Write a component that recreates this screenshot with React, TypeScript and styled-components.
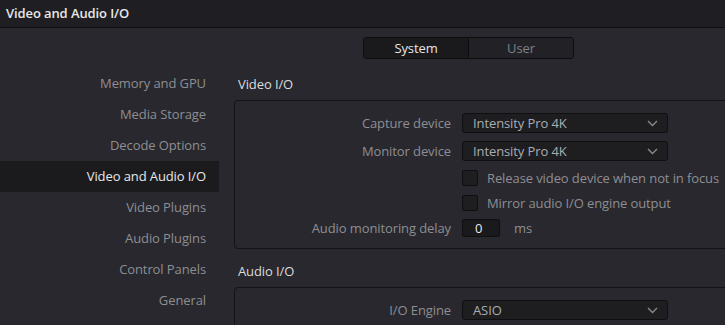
import React from "react";
import styled, { createGlobalStyle } from "styled-components";

const GlobalStyle = createGlobalStyle`
  html, body {
    margin: 0;
    padding: 0;
    background: #28282e;
    font-family: "Open Sans", "Liberation Sans", sans-serif;
  }
  * { box-sizing: border-box; }
`;

const sideItems = [
  "Memory and GPU",
  "Media Storage",
  "Decode Options",
  "Video and Audio I/O",
  "Video Plugins",
  "Audio Plugins",
  "Control Panels",
  "General",
];

export default function App() {
  return (
    <>
      <GlobalStyle />
      <Window>
        <TitleBar>Video and Audio I/O</TitleBar>
        <TabRow>
          <Tabs>
            <Tab $active>System</Tab>
            <Tab>User</Tab>
          </Tabs>
        </TabRow>
        <Body>
          <Sidebar>
            {sideItems.map((item) => (
              <SideItem key={item} $active={item === "Video and Audio I/O"}>
                {item}
              </SideItem>
            ))}
          </Sidebar>
          <Content>
            <SectionTitle>Video I/O</SectionTitle>
            <Panel>
              <Row>
                <Label>Capture device</Label>
                <Select>
                  <span>Intensity Pro 4K</span>
                  <Chevron />
                </Select>
              </Row>
              <Row>
                <Label>Monitor device</Label>
                <Select>
                  <span>Intensity Pro 4K</span>
                  <Chevron />
                </Select>
              </Row>
              <Row $check>
                <span />
                <CheckLine>
                  <Checkbox />
                  Release video device when not in focus
                </CheckLine>
              </Row>
              <Row $check>
                <span />
                <CheckLine>
                  <Checkbox />
                  Mirror audio I/O engine output
                </CheckLine>
              </Row>
              <Row>
                <Label>Audio monitoring delay</Label>
                <InputLine>
                  <NumberBox>0</NumberBox>
                  <Unit>ms</Unit>
                </InputLine>
              </Row>
            </Panel>
            <SectionTitle $spaced>Audio I/O</SectionTitle>
            <Panel>
              <Row>
                <Label>I/O Engine</Label>
                <Select>
                  <span>ASIO</span>
                  <Chevron />
                </Select>
              </Row>
            </Panel>
          </Content>
        </Body>
      </Window>
    </>
  );
}

function Chevron() {
  return (
    <ChevronSvg width="11" height="7" viewBox="0 0 11 7">
      <path d="M1 1 L5.5 5.5 L10 1" fill="none" stroke="#8a8a8e" strokeWidth="1.4" />
    </ChevronSvg>
  );
}

const Window = styled.div`
  width: 725px;
  height: 325px;
  overflow: hidden;
  background: #28282e;
  font-size: 13px;
  letter-spacing: -0.1px;
`;

const TitleBar = styled.div`
  height: 28px;
  padding: 0 6px;
  line-height: 27px;
  background: #1f1f23;
  border-bottom: 1px solid #0f0f11;
  color: #e8e8e8;
  font-weight: 600;
  font-size: 13px;
`;

const TabRow = styled.div`
  display: flex;
  padding: 9px 0 0 363px;
  height: 40px;
`;

const Tabs = styled.div`
  display: flex;
  width: 211px;
  height: 22px;
  border: 1px solid #0d0d0f;
  border-radius: 3px;
  overflow: hidden;
`;

const Tab = styled.div<{ $active?: boolean }>`
  flex: 1;
  display: flex;
  align-items: center;
  justify-content: center;
  font-size: 13px;
  color: ${({ $active }) => ($active ? "#e6e6e6" : "#7c8188")};
  background: ${({ $active }) => ($active ? "#1a1a1c" : "#222226")};
  & + & { border-left: 1px solid #0d0d0f; }
`;

const Body = styled.div`
  display: flex;
  gap: 15px;
`;

const Sidebar = styled.div`
  width: 219px;
  flex-shrink: 0;
  display: flex;
  flex-direction: column;
`;

const SideItem = styled.div<{ $active?: boolean }>`
  height: 31px;
  line-height: 31px;
  text-align: right;
  padding-right: 13px;
  color: ${({ $active }) => ($active ? "#e8e8e8" : "#8e8e92")};
  background: ${({ $active }) => ($active ? "#1b1b1d" : "transparent")};
`;

const Content = styled.div`
  width: 520px;
  flex-shrink: 0;
`;

const SectionTitle = styled.div<{ $spaced?: boolean }>`
  height: 32px;
  line-height: 32px;
  padding-left: 4px;
  margin-top: ${({ $spaced }) => ($spaced ? "6px" : "0")};
  color: #dcdcdc;
`;

const Panel = styled.div`
  border: 1px solid #131315;
  border-radius: 4px;
  padding: 12px 0 11px;
  display: flex;
  flex-direction: column;
  gap: 8px;
`;

const Row = styled.div<{ $check?: boolean }>`
  display: grid;
  grid-template-columns: 216px 1fr;
  column-gap: 11px;
  align-items: ${({ $check }) => ($check ? "end" : "center")};
  height: ${({ $check }) => ($check ? "17px" : "auto")};
`;

const Label = styled.div`
  text-align: right;
  color: #8e8e92;
`;

const Select = styled.div`
  width: 206px;
  height: 20px;
  display: flex;
  align-items: center;
  justify-content: space-between;
  padding: 0 9px 0 10px;
  background: #1e1e21;
  border: 1px solid #0f0f11;
  border-radius: 3px;
  color: #a9adb2;
`;

const ChevronSvg = styled.svg`
  display: block;
`;

const CheckLine = styled.div`
  display: flex;
  align-items: center;
  gap: 9px;
  height: 16px;
  color: #8e8e92;
  white-space: nowrap;
`;

const Checkbox = styled.div`
  width: 16px;
  height: 16px;
  background: #1e1e21;
  border: 1px solid #0f0f11;
  border-radius: 2px;
  flex-shrink: 0;
`;

const InputLine = styled.div`
  display: flex;
  align-items: center;
  gap: 14px;
`;

const NumberBox = styled.div`
  width: 38px;
  height: 18px;
  line-height: 16px;
  padding-left: 12px;
  background: #1a1a1c;
  border: 1px solid #0f0f11;
  border-radius: 2px;
  color: #e6e6e6;
`;

const Unit = styled.span`
  color: #8e8e92;
`;
